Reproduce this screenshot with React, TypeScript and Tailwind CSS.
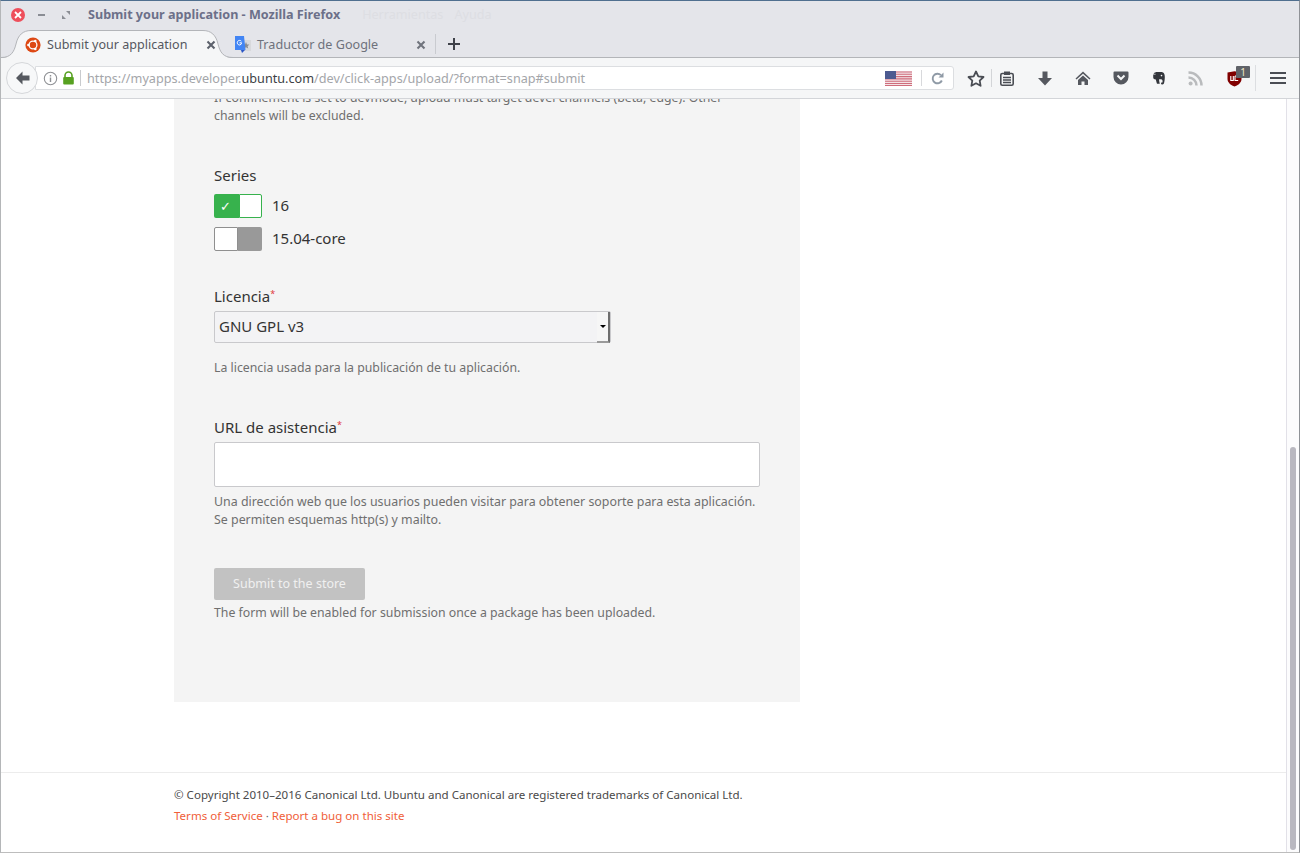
import React from "react";

const Ubuntu = () => (
  <svg width="16" height="16" viewBox="0 0 16 16" className="shrink-0">
    <circle cx="8" cy="8" r="7.6" fill="#dd4814" />
    <circle cx="8" cy="8" r="3.9" fill="none" stroke="#fff" strokeWidth="1.3" />
    <circle cx="3.4" cy="8" r="1.3" fill="#fff" />
    <circle cx="10.3" cy="4" r="1.3" fill="#fff" />
    <circle cx="10.3" cy="12" r="1.3" fill="#fff" />
  </svg>
);

const Close = ({ color = "#5c616c" }: { color?: string }) => (
  <svg width="10" height="10" viewBox="0 0 10 10" className="shrink-0">
    <path d="M1.5 1.5l7 7M8.5 1.5l-7 7" stroke={color} strokeWidth="2.1" />
  </svg>
);

const Translate = () => (
  <svg width="17" height="18" viewBox="0 0 17 18" className="shrink-0">
    <rect x="6" y="4" width="11" height="11" fill="#d8d9dc" />
    <path d="M12 6l1 2.4 2.4.2-1.8 1.6.6 2.4-2.2-1.3-2.2 1.3.6-2.4-1.8-1.6 2.4-.2z" fill="#8a8d93" />
    <path d="M1 0h9l1.5 14H1z" fill="#4285f4" />
    <path d="M7 14l1 3 3-3z" fill="#2a56c6" />
    <path d="M7.300 5.200A2.300 2.300 0 105.400 9a2.300 2.300 0 002.200-2.200H5.500" fill="none" stroke="#fff" strokeWidth="1" />
  </svg>
);

const Flag = () => (
  <svg width="27" height="15" viewBox="0 0 27 15" className="shrink-0">
    <rect width="27" height="15" fill="#f3e3e6" />
    <path d="M0 1h27M0 3.3h27M0 5.6h27M0 7.9h27M0 10.2h27M0 12.5h27M0 14.5h27" stroke="#cf6d7c" strokeWidth="1.1" />
    <rect width="11" height="8" fill="#4c5a90" />
  </svg>
);

const Toggle = ({ on }: { on: boolean }) =>
  on ? (
    <span className="flex w-[48px] h-[24px] shrink-0">
      <span className="w-[25px] bg-[#37b24d] rounded-l-[2px] flex items-center justify-center text-white text-[13px] leading-none pr-[3px]">
        ✓
      </span>
      <span className="flex-1 bg-white border border-[#37b24d] rounded-r-[2px]" />
    </span>
  ) : (
    <span className="flex w-[48px] h-[24px] shrink-0">
      <span className="w-[24px] bg-white border border-[#8f8f8f] rounded-l-[2px]" />
      <span className="flex-1 bg-[#999999] rounded-r-[2px]" />
    </span>
  );

const Req = () => <sup className="text-[#e0393e] text-[9px] top-[-5px] relative align-baseline">*</sup>;

export default function App() {
  return (
    <div
      className="w-[1300px] h-[853px] overflow-hidden flex flex-col bg-white border-t border-t-[#4f6f8f] border-l border-l-[#b4b6b8] border-r border-r-[#8f9297] border-b border-b-[#bdbdbd]"
      style={{ fontFamily: '"Noto Sans", sans-serif' }}
    >
      {/* title bar */}
      <div className="h-[28px] shrink-0 bg-[#e4e5ea] flex items-center relative">
        <span className="ml-[10px] w-[14px] h-[14px] rounded-full bg-[#ee4f5b] flex items-center justify-center">
          <svg width="8" height="8" viewBox="0 0 8 8">
            <path d="M1 1l6 6M7 1l-6 6" stroke="#fff" strokeWidth="1.8" />
          </svg>
        </span>
        <span className="ml-[13px] w-[7px] h-[2px] bg-[#8a8d94]" />
        <svg width="8" height="8" viewBox="0 0 8 8" className="ml-[17px]">
          <path d="M4 0h4v4zM4 8H0V4z" fill="#8a8d94" />
        </svg>
        <span className="ml-[18px] text-[12.6px] font-bold text-[#6c7089] whitespace-nowrap">
          Submit your application - Mozilla Firefox
        </span>
        <span className="ml-[22px] text-[12.6px] text-[#dddee3]">Herramientas</span>
        <span className="ml-[11px] text-[12.6px] text-[#dddee3]">Ayuda</span>
      </div>

      {/* tab strip */}
      <div className="h-[28px] shrink-0 bg-[#e4e5ea] flex items-stretch relative z-10">
        <div className="w-[232px] h-[28px] relative flex items-center pl-[24px] pr-[17px] pt-[4px]">
          <svg width="232" height="28" viewBox="0 0 232 28" className="absolute left-0 top-[1px]" fill="none">
            <path d="M0 28C10 28 13 22 15 14 17 5 22 0.500 30 0.500H202C210 0.500 215 5 217 14 219 22 222 28 232 28z" fill="#f5f6f7" />
            <path d="M0 27.500C10 27.500 13 22 15 14 17 5 22 0.500 30 0.500H202C210 0.500 215 5 217 14 219 22 222 27.500 232 27.500" stroke="#b3b5b9" />
          </svg>
          <span className="relative flex items-center w-full">
            <Ubuntu />
            <span className="ml-[6px] text-[12.55px] text-[#55585f] whitespace-nowrap">Submit your application</span>
            <span className="ml-auto">
              <Close />
            </span>
          </span>
        </div>
        <div className="w-[202px] flex items-center pl-[1px] pr-[9px] pt-[4px] h-[28px]">
          <Translate />
          <span className="ml-[6px] text-[12.6px] text-[#6e727c] whitespace-nowrap">Traductor de Google</span>
          <span className="ml-auto">
            <Close color="#70747d" />
          </span>
        </div>
        <span className="w-px h-[20px] mt-[5px] bg-[#c9cbd0]" />
        <svg width="14" height="14" viewBox="0 0 14 14" className="ml-[11px] mt-[8px]">
          <path d="M7 1v12M1 7h12" stroke="#3e4149" strokeWidth="2" />
        </svg>
      </div>

      {/* nav bar */}
      <div className="h-[42px] shrink-0 bg-[#f5f6f7] border-t border-t-[#b3b5b9] border-b border-b-[#d3d5d9] flex items-center relative">
        <span className="ml-[5px] w-[32px] h-[32px] rounded-full bg-[#f7f8f9] border border-[#d5d7da] flex items-center justify-center shrink-0 relative z-10">
          <svg width="15" height="14" viewBox="0 0 15 14">
            <path d="M7.500 0.500L1 7l6.500 6.500V9.500H14.500v-5H7.500z" fill="#55585f" />
          </svg>
        </span>
        <div className="-ml-[3px] w-[919px] h-[24px] bg-white border border-[#dcdee1] rounded-r-[3px] flex items-center shrink-0">
          <svg width="15" height="15" viewBox="0 0 15 15" className="ml-[7px] shrink-0">
            <circle cx="7.5" cy="7.5" r="6.2" fill="none" stroke="#8e9094" strokeWidth="1.1" />
            <path d="M7.5 6.5v4.5M7.5 4v1.6" stroke="#8e9094" strokeWidth="1.4" />
          </svg>
          <svg width="13" height="14" viewBox="0 0 13 14" className="ml-[4px] shrink-0">
            <path d="M3 6.5V4.5a3.5 3.5 0 017 0v2" fill="none" stroke="#57a121" strokeWidth="1.6" />
            <rect x="1.2" y="6" width="10.6" height="7.5" rx="1" fill="#57a121" />
          </svg>
          <span className="ml-[5px] w-px h-[16px] bg-[#c9cbce] shrink-0" />
          <span className="ml-[6px] text-[12.65px] text-[#a4a6aa] whitespace-nowrap">
            https://myapps.developer.<span className="text-[#3d3f45]">ubuntu.com</span>/dev/click-apps/upload/?format=snap#submit
          </span>
          <span className="ml-auto">
            <Flag />
          </span>
          <span className="ml-[9px] w-px h-[16px] bg-[#d8d9dc]" />
          <svg width="13" height="13" viewBox="0 0 13 13" className="ml-[9px] mr-[9px] shrink-0">
            <path d="M10.850 8.500A4.800 4.800 0 119.900 3.100" fill="none" stroke="#8f9aa6" strokeWidth="1.9" />
            <path d="M7.500 5.500H12.500V0.500z" fill="#8f9aa6" />
          </svg>
        </div>
        <svg width="18" height="17" viewBox="0 0 18 17" className="ml-[13px] shrink-0">
          <path d="M9 1.500l2.300 4.800 5.200.7-3.800 3.600.9 5.200L9 13.300l-4.600 2.500.9-5.200L1.500 7l5.200-.7z" fill="none" stroke="#4a4d54" strokeWidth="1.800" strokeLinejoin="round" />
        </svg>
        <span className="ml-[6px] w-px h-[18px] bg-[#d3d5d8] shrink-0" />
        <svg width="14" height="15" viewBox="0 0 14 15" className="ml-[8px] shrink-0">
          <rect x="0.800" y="2.500" width="12.400" height="11.700" rx="1.500" fill="none" stroke="#4a4d54" strokeWidth="1.600" />
          <rect x="4" y="0.500" width="6" height="3.500" fill="#4a4d54" />
          <path d="M3 6.500h8M3 9h8M3 11.500h8" stroke="#4a4d54" strokeWidth="1.300" />
        </svg>
        <svg width="14" height="15" viewBox="0 0 14 15" className="ml-[24px] shrink-0">
          <path d="M4.500 0.500h5V7H14l-7 7.500L0 7h4.500z" fill="#55585f" />
        </svg>
        <svg width="16" height="14" viewBox="0 0 16 14" className="ml-[23px] shrink-0">
          <path d="M8 0.500L0.500 7.500l1 1L8 2.800l6.500 5.700 1-1zM3 9l5-4.400L13 9v5H9.500v-3.500h-3V14H3z" fill="#55585f" />
        </svg>
        <svg width="16" height="14" viewBox="0 0 16 14" className="ml-[22px] shrink-0">
          <path d="M1.500 0.500h13A1 1 0 0115.500 1.500V6A7.500 7.500 0 010.500 6V1.500a1 1 0 011-1z" fill="#55585f" />
          <path d="M4.500 4.500L8 8l3.500-3.500" fill="none" stroke="#f5f6f7" strokeWidth="2" />
        </svg>
        <svg width="14" height="15" viewBox="0 0 14 15" className="ml-[23px] shrink-0">
          <path d="M1.500 2.500L3.500 1l.3 2.200zM3.800 1H9c3 0 3.800 2.200 3.800 5 0 3-.4 5-1 6.800-.9 1.300-2.800.9-2.800-.6 0-.9.9-.8 1.400-.8.400-1 .2-2.400-.6-2.900-1-.3-2.200-.3-2.800 0 .2 1.500.4 2.900.8 4.200H5C4.400 11.500 4.200 9.800 3.800 8.600 2.300 8.300 1.200 7.700 1.200 6.500V3.500h2.600z" fill="#33363c" />
          <circle cx="9.500" cy="4.600" r="0.800" fill="#f5f6f7" />
        </svg>
        <svg width="15" height="15" viewBox="0 0 15 15" className="ml-[22px] shrink-0">
          <circle cx="2.600" cy="12.400" r="2" fill="#b9bbbd" />
          <path d="M0.500 6.500a8 8 0 018 8M0.500 1.500a13 13 0 0113 13" fill="none" stroke="#b9bbbd" strokeWidth="2.500" />
        </svg>
        <div className="ml-[24px] w-[22px] h-[20px] relative shrink-0">
          <svg width="15" height="16" viewBox="0 0 15 16" className="absolute left-0 top-[3px]">
            <path d="M0.500 1.500l7-1.200 7 1.200V8c0 4-4 6.500-7 7.500-3-1-7-3.500-7-7.500z" fill="#800000" />
            <path d="M3.800 5v4.500h2.500V5M8 5v4.500h3.200M11.200 5H8" fill="none" stroke="#fff" strokeWidth="1.100" />
          </svg>
          <span className="absolute right-[-1px] top-[-2px] w-[14px] h-[12px] bg-[#5f6268] rounded-[1px] text-[#f4e9c4] text-[10px] leading-[12px] text-center">
            1
          </span>
        </div>
        <span className="ml-[6px] w-px h-[26px] bg-[#dcdee1] shrink-0" />
        <svg width="16" height="14" viewBox="0 0 16 14" className="ml-[14px] shrink-0">
          <path d="M0 2h16M0 7h16M0 12h16" stroke="#4a4d54" strokeWidth="2.200" />
        </svg>
      </div>

      {/* page */}
      <div className="flex-1 min-h-0 flex overflow-hidden">
        <div className="flex-1 min-w-0 flex flex-col overflow-hidden">
          <div className="ml-[173px] w-[626px] h-[603px] bg-[#f4f4f4] px-[40px] shrink-0 overflow-hidden text-[#333333]">
            <p className="text-[12.3px] leading-[18px] text-[#6f6f6f] w-[520px] -mt-[10px]">
              If confinement is set to devmode, upload must target devel channels (beta, edge). Other channels will be excluded.
            </p>
            <p className="mt-[38px] text-[15px] leading-[24px]">Series</p>
            <div className="mt-[7px] flex items-center gap-[10px] text-[15px] h-[24px]">
              <Toggle on />
              <span className="-translate-y-px">16</span>
            </div>
            <div className="mt-[9px] flex items-center gap-[10px] text-[15px] h-[24px]">
              <Toggle on={false} />
              <span className="-translate-y-px">15.04-core</span>
            </div>
            <p className="mt-[33px] text-[15px] leading-[24px]">
              Licencia
              <Req />
            </p>
            <div className="mt-[3px] w-[397px] h-[32px] bg-[#f3f3f5] border border-[#c9c9cc] rounded-[2px] flex items-center text-[15px]">
              <span className="ml-[4px] -translate-y-px">GNU GPL v3</span>
              <span className="ml-auto w-[13px] h-[31px] bg-[#f6f6f6] border-r-2 border-b-2 border-r-[#6e6e6e] border-b-[#9a9a9a] flex items-center justify-center">
                <span className="w-0 h-0 border-l-[3px] border-r-[3px] border-t-[3px] border-l-transparent border-r-transparent border-t-black" />
              </span>
            </div>
            <p className="mt-[16px] text-[12.3px] leading-[18px] text-[#6f6f6f]">La licencia usada para la publicación de tu aplicación.</p>
            <p className="mt-[38px] text-[15px] leading-[24px]">
              URL de asistencia
              <Req />
            </p>
            <div className="mt-[3px] w-[546px] h-[45px] bg-white border border-[#c9c9cc] rounded-[2px]" />
            <p className="mt-[6px] text-[12.4px] leading-[18px] text-[#6f6f6f] whitespace-nowrap">
              Una dirección web que los usuarios pueden visitar para obtener soporte para esta aplicación.
              <br />
              Se permiten esquemas http(s) y mailto.
            </p>
            <button className="mt-[39px] block w-[151px] h-[32px] pt-[1px] bg-[#c2c2c2] rounded-[2px] text-[12.5px] text-[#f0f0f0]">
              Submit to the store
            </button>
            <p className="mt-[4px] text-[12.3px] leading-[18px] text-[#6f6f6f]">
              The form will be enabled for submission once a package has been uploaded.
            </p>
          </div>
          <div className="mt-[70px] border-t border-[#ececec] pl-[173px] pt-[11px] text-[11.55px] leading-[21px]">
            <p className="text-[#4a4a4a]">
              © Copyright 2010–2016 Canonical Ltd. Ubuntu and Canonical are registered trademarks of Canonical Ltd.
            </p>
            <p className="text-[#6b6b6b]">
              <span className="text-[#f0603a]">Terms of Service</span> · <span className="text-[#f0603a]">Report a bug on this site</span>
            </p>
          </div>
        </div>
        {/* scrollbar */}
        <div className="w-[13px] shrink-0 bg-[#fcfcfd] border-l border-[#e2e1e8] flex flex-col justify-end pl-[3px] pr-[3px]">
          <div className="h-[403px] bg-[#b9b8c0] rounded-[3px] mb-[2px]" />
        </div>
      </div>
    </div>
  );
}
